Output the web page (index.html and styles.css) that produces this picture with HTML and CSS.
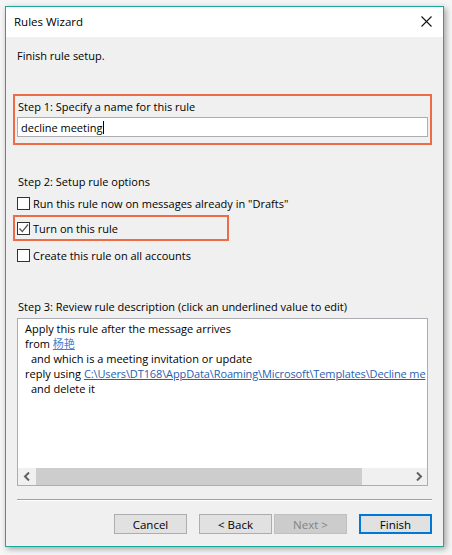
FILE: index.html
```html
<!DOCTYPE html>
<html>
<head>
<meta charset="utf-8">
<link rel="stylesheet" href="styles.css">
</head>
<body>
<div class="window">
  <div class="titlebar">
    <span class="title">Rules Wizard</span>
    <svg class="close" width="11" height="11" viewBox="0 0 11 11"><path d="M0.5 0.5 L10.5 10.5 M10.5 0.5 L0.5 10.5" stroke="#111" stroke-width="1.1" fill="none"/></svg>
  </div>
  <div class="content">
    <div class="intro">Finish rule setup.</div>
    <div class="hl hl-name">
      <div class="label">Step 1: Specify a name for this rule</div>
      <div class="input"><span>decline meeting</span><span class="caret"></span></div>
    </div>
    <div class="label step2">Step 2: Setup rule options</div>
    <div class="opt opt1"><span class="cb"></span><span>Run this rule now on messages already in "Drafts"</span></div>
    <div class="hl hl-opt">
      <div class="opt"><span class="cb checked"><svg width="11" height="11" viewBox="0 0 11 11"><path d="M1.5 5.5 L4.3 8.6 L10 1.5" stroke="#555" stroke-width="1.3" fill="none"/></svg></span><span>Turn on this rule</span></div>
    </div>
    <div class="opt opt3"><span class="cb"></span><span>Create this rule on all accounts</span></div>
    <div class="label step3">Step 3: Review rule description (click an underlined value to edit)</div>
    <div class="desc">
      <div class="desc-text">
        <div class="line">Apply this rule after the message arrives</div>
        <div class="line">from <span class="link name">杨艳</span></div>
        <div class="line indent">and which is a meeting invitation or update</div>
        <div class="line">reply using <span class="link path">C:\Users\DT168\AppData\Roaming\Microsoft\Templates\Decline me</span></div>
        <div class="line indent">and delete it</div>
      </div>
      <div class="hscroll">
        <span class="arrow"><svg width="8" height="9" viewBox="0 0 8 9"><path d="M6 0.5 L2 4.5 L6 8.5" stroke="#606060" stroke-width="2" fill="none"/></svg></span>
        <span class="track"><span class="thumb"></span></span>
        <span class="arrow"><svg width="8" height="9" viewBox="0 0 8 9"><path d="M2 0.5 L6 4.5 L2 8.5" stroke="#606060" stroke-width="2" fill="none"/></svg></span>
      </div>
    </div>
    <div class="sep"></div>
    <div class="buttons">
      <span class="btn">Cancel</span>
      <span class="pair">
        <span class="btn">&lt; Back</span>
        <span class="btn disabled">Next &gt;</span>
      </span>
      <span class="btn default">Finish</span>
    </div>
  </div>
</div>
</body>
</html>
```
FILE: styles.css
```css
html, body {
  margin: 0;
  padding: 0;
  background: #f5f5f5;
}
body {
  font-family: "Open Sans", "Noto Sans CJK SC", sans-serif;
  font-size: 11px;
  color: #000;
  width: 452px;
  height: 555px;
  overflow: hidden;
}
.window {
  margin: 6px 0 0 5px;
  width: 439px;
  height: 541px;
  box-sizing: border-box;
  border: 1px solid #1ba899;
  background: #f0f0f0;
  box-shadow: 2px 2px 6px rgba(0,0,0,0.35);
  display: flex;
  flex-direction: column;
}
.titlebar {
  height: 30px;
  background: #fff;
  display: flex;
  align-items: center;
  justify-content: space-between;
  padding: 0 11px 0 8px;
  flex: none;
}
.title {
  font-size: 11.5px;
  line-height: 15px;
  margin-top: -1px;
}
.close {
  display: block;
  margin-top: -2px;
}
.content {
  flex: 1;
  display: flex;
  flex-direction: column;
  line-height: 15px;
}
.intro {
  margin: 11px 0 0 11px;
}
.hl {
  border: 2px solid #ec6c45;
  box-sizing: border-box;
  margin-left: 7px;
}
.hl-name {
  width: 419px;
  padding: 3px 0 6px 2px;
  margin-top: 31px;
}
.hl-name .label {
  padding-left: 1px;
}
.input {
  margin-top: 3px;
  width: 411px;
  height: 20px;
  box-sizing: border-box;
  border: 1px solid #abadb3;
  background: #fff;
  padding-left: 3px;
  display: flex;
  align-items: center;
}
.caret {
  display: inline-block;
  width: 1px;
  height: 13px;
  background: #000;
  margin-left: 1px;
}
.step2 {
  margin: 29px 0 0 12px;
}
.opt {
  display: flex;
  align-items: center;
  height: 15px;
  gap: 3px;
}
.opt1, .opt3 {
  margin-left: 11px;
}
.opt1 {
  margin-top: 7px;
}
.opt3 {
  margin-top: 7px;
}
.cb {
  width: 13px;
  height: 13px;
  box-sizing: border-box;
  border: 1px solid #333;
  background: #fff;
  flex: none;
  display: flex;
  align-items: center;
  justify-content: center;
}
.cb svg {
  display: block;
}
.hl-opt {
  width: 216px;
  margin-top: 4px;
  padding: 4px 0 3px 2px;
}
.step3 {
  margin: 36px 0 0 12px;
}
.desc {
  margin: 4px 0 0 11px;
  width: 411px;
  height: 168px;
  box-sizing: border-box;
  border: 1px solid #abadb3;
  background: #fff;
  display: flex;
  flex-direction: column;
  overflow: hidden;
}
.desc-text {
  flex: 1;
  padding: 2px 0 0 7px;
  white-space: nowrap;
  overflow: hidden;
}
.indent {
  padding-left: 6px;
}
.link {
  color: #1f5fb0;
  text-decoration: underline;
}
.link.path {
  letter-spacing: -0.12px;
}
.link.name {
  color: #4a7fd0;
}
.hscroll {
  height: 17px;
  background: #f0f0f0;
  display: flex;
  align-items: center;
  flex: none;
}
.arrow {
  width: 17px;
  display: flex;
  justify-content: center;
  flex: none;
}
.arrow svg {
  display: block;
}
.track {
  flex: 1;
  height: 17px;
  display: flex;
}
.thumb {
  width: 326px;
  margin-left: 1px;
  background: #cdcdcd;
}
.sep {
  margin: 13px 0 0 11px;
  width: 415px;
  height: 1px;
  background: #a0a0a0;
  border-bottom: 1px solid #fff;
}
.buttons {
  margin-top: 13px;
  padding-right: 11px;
  display: flex;
  justify-content: flex-end;
  gap: 12px;
}
.pair {
  display: flex;
  gap: 2px;
}
.btn {
  width: 73px;
  height: 20px;
  box-sizing: border-box;
  border: 1px solid #adadad;
  background: #e1e1e1;
  display: flex;
  align-items: center;
  justify-content: center;
  font-size: 11.5px;
}
.btn.disabled {
  background: #cccccc;
  border-color: #bfbfbf;
  color: #838383;
}
.btn.default {
  border: 2px solid #0078d7;
}
```
